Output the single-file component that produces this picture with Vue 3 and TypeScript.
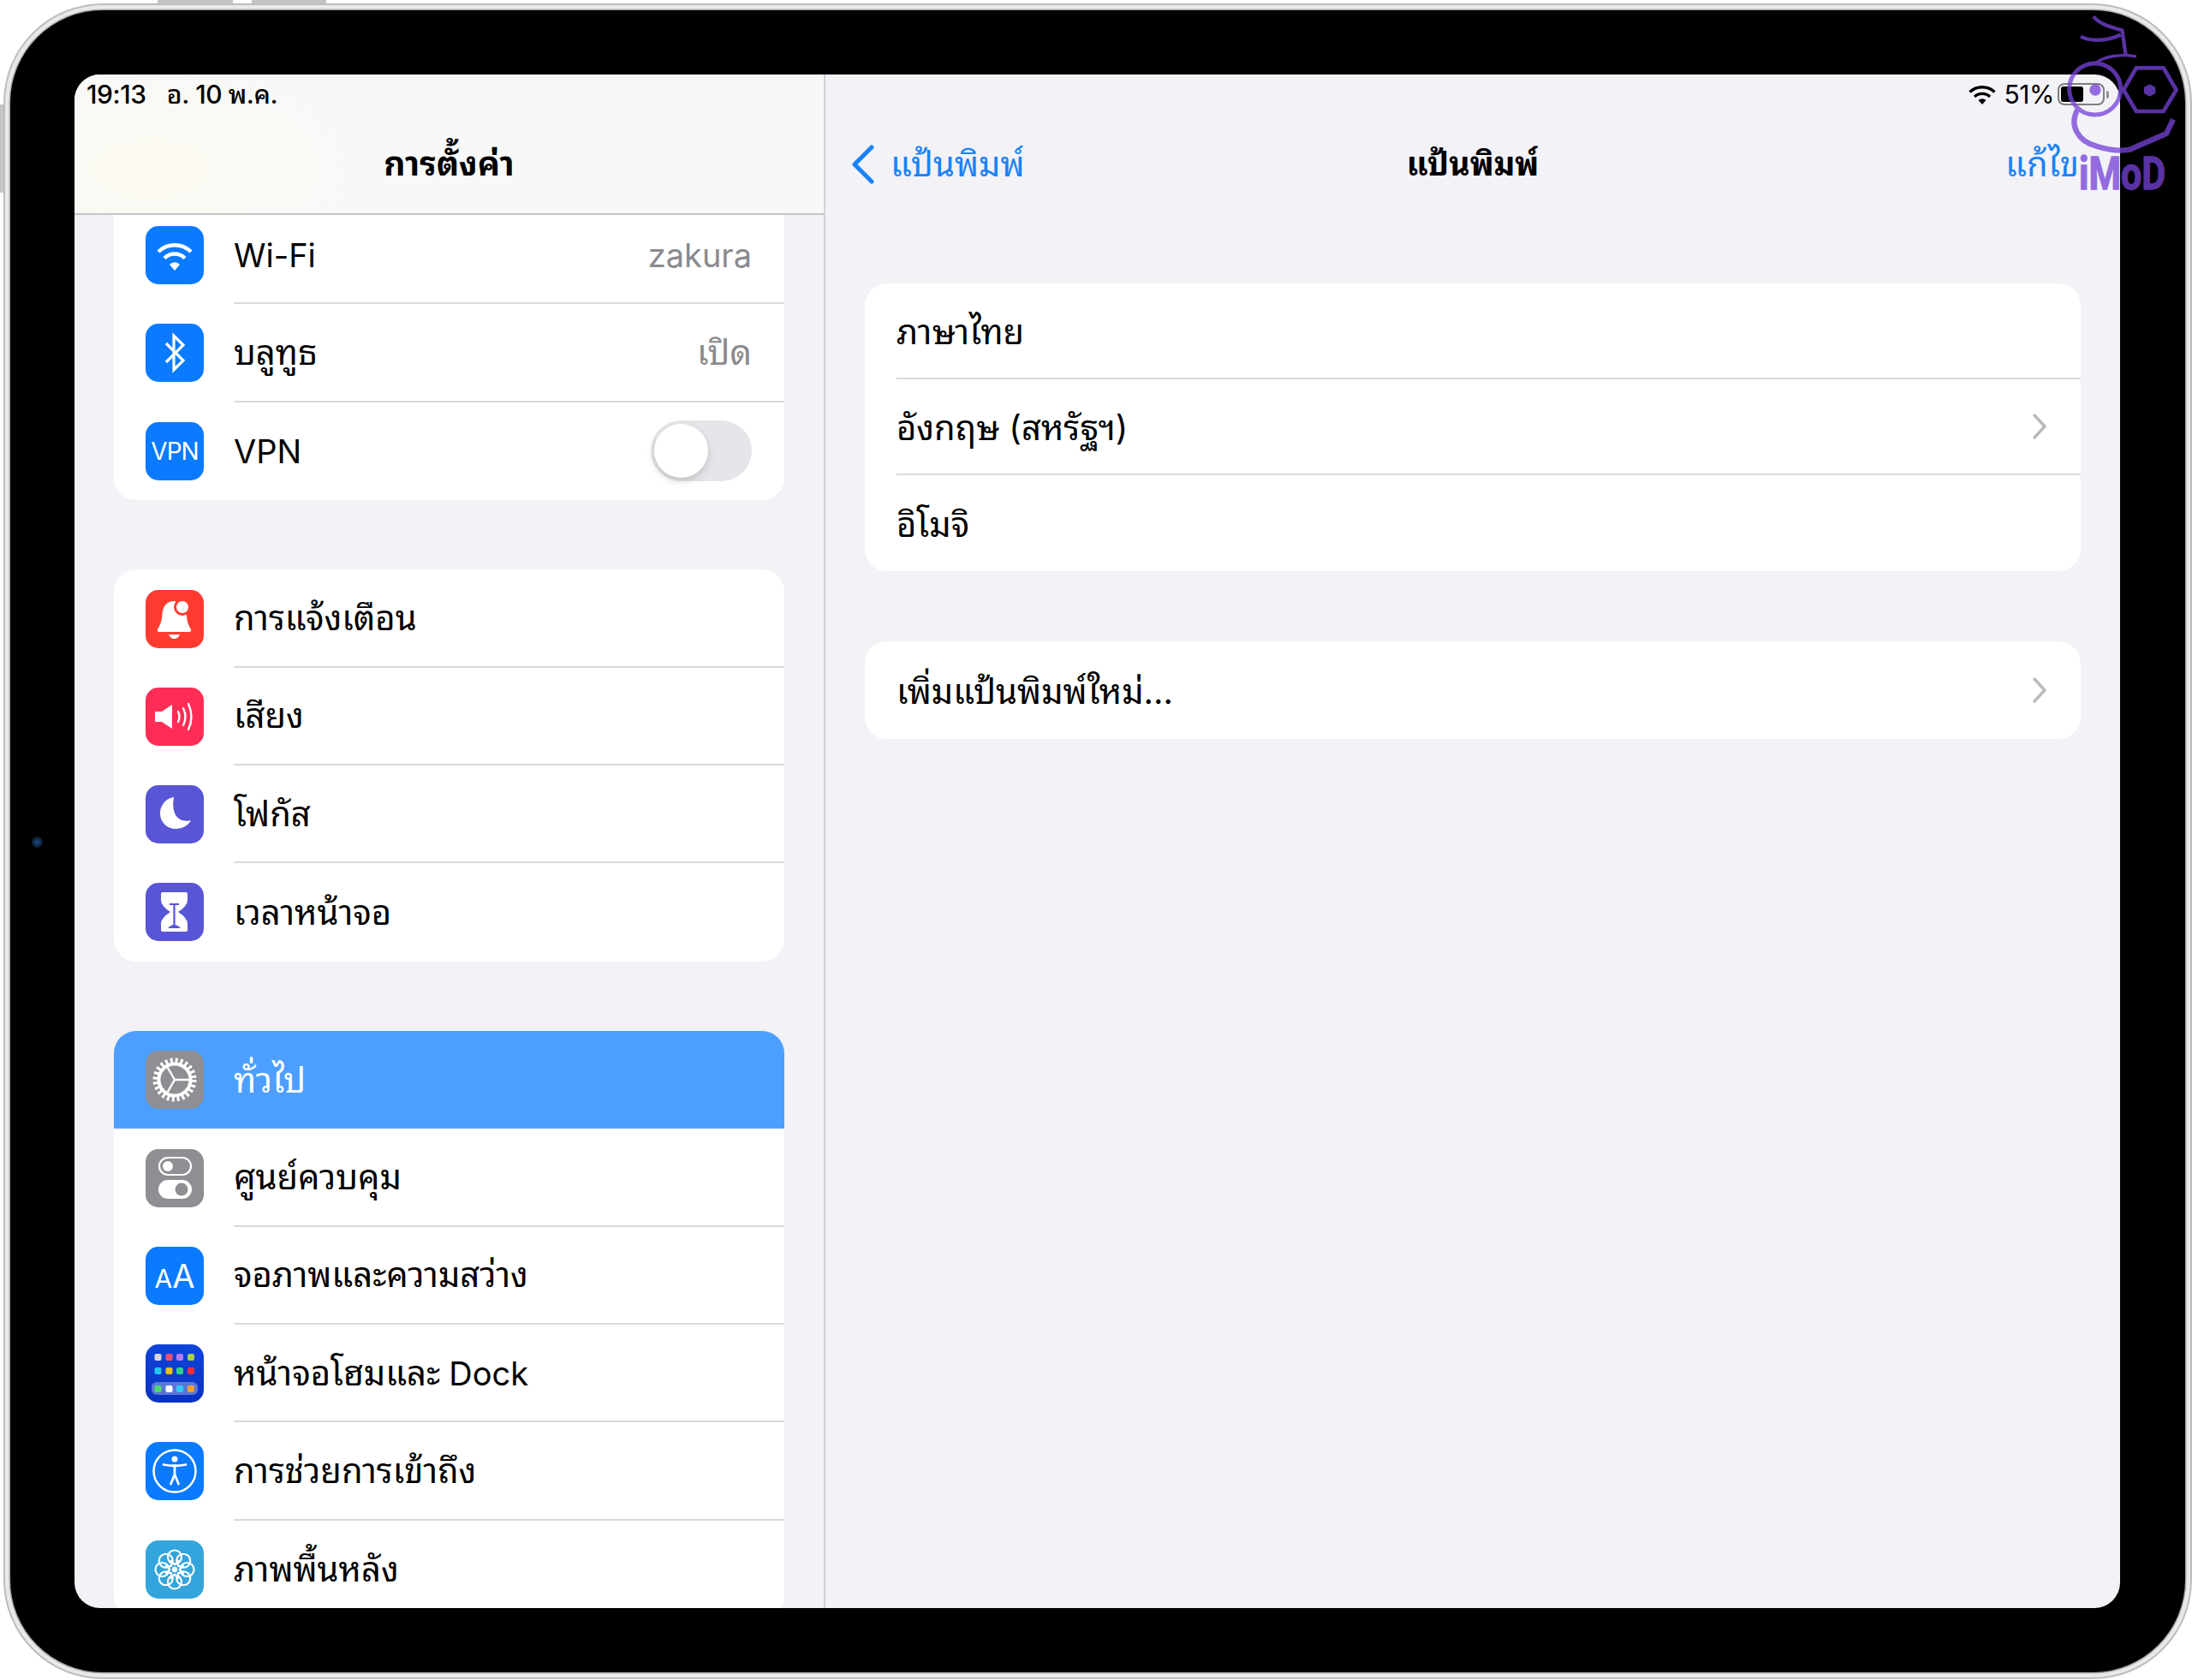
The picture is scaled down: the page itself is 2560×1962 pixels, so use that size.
<script setup lang="ts">
type SideRow = {
  icon: string;
  label: string;
  latin?: boolean;
  suffix?: string;
  value?: string;
  valueLatin?: boolean;
  toggle?: boolean;
  selected?: boolean;
};

const groups: SideRow[][] = [
  [
    { icon: "wifi", label: "Wi-Fi", latin: true, value: "zakura", valueLatin: true },
    { icon: "bluetooth", label: "บลูทูธ", value: "เปิด" },
    { icon: "vpn", label: "VPN", latin: true, toggle: true },
  ],
  [
    { icon: "bell", label: "การแจ้งเตือน" },
    { icon: "sound", label: "เสียง" },
    { icon: "moon", label: "โฟกัส" },
    { icon: "hourglass", label: "เวลาหน้าจอ" },
  ],
  [
    { icon: "gear", label: "ทั่วไป", selected: true },
    { icon: "control", label: "ศูนย์ควบคุม" },
    { icon: "display", label: "จอภาพและความสว่าง" },
    { icon: "home", label: "หน้าจอโฮมและ", suffix: "Dock" },
    { icon: "access", label: "การช่วยการเข้าถึง" },
    { icon: "wallpaper", label: "ภาพพื้นหลัง" },
  ],
];

const keyboards = [
  { label: "ภาษาไทย", chevron: false },
  { label: "อังกฤษ (สหรัฐฯ)", chevron: true },
  { label: "อิโมจิ", chevron: false },
];

const homeRows = [
  { y: 11, colors: ["#d9d9d9", "#f0506e", "#b57aee", "#a8d040"] },
  { y: 27, colors: ["#22c5f0", "#f7c010", "#30d090", "#f03040"] },
  { y: 48, colors: ["#50d870", "#ffffff", "#30c8f5", "#f5a030"] },
];
const homeX = [10.5, 23.5, 36, 49];
const petals = [0, 45, 90, 135, 180, 225, 270, 315];
const spokes = [90, 210, 330];
</script>

<template>
  <div class="page">
    <span class="hw hw-top-a"></span>
    <span class="hw hw-top-b"></span>
    <span class="hw hw-side"></span>

    <div class="bezel">
      <span class="camera"></span>
      <div class="screen">
        <aside class="sidebar">
          <header class="side-head">
            <div class="status-left">
              <span>19:13</span>
              <span>อ. 10 พ.ค.</span>
            </div>
            <div class="nav-title">การตั้งค่า</div>
          </header>

          <div class="side-scroll">
            <section v-for="(group, g) in groups" :key="g" class="card">
              <div
                v-for="row in group"
                :key="row.icon"
                :class="['row', { selected: row.selected }]"
              >
                <div :class="['icon', 'icon-' + row.icon]">
                  <svg v-if="row.icon === 'wifi'" viewBox="0 0 68 68" fill="none" stroke="#fff" stroke-width="4.5">
                    <path d="M15 30 A27 27 0 0 1 53 30" />
                    <path d="M22 37.500 A17 17 0 0 1 46 37.500" />
                    <path d="M28 45 L34 52 L40 45 A8 8 0 0 0 28 45 Z" fill="#fff" stroke="none" />
                  </svg>
                  <svg v-else-if="row.icon === 'bluetooth'" viewBox="0 0 68 68" fill="none" stroke="#fff" stroke-width="3.2">
                    <path d="M24 23 L44 43 L33 54 V14 L44 25 L24 45" />
                  </svg>
                  <span v-else-if="row.icon === 'vpn'" class="vpn-text">VPN</span>
                  <svg v-else-if="row.icon === 'bell'" viewBox="0 0 68 68" fill="#fff">
                    <path d="M33.500 13 C24 13 20 20 19.500 28 C19 37 17 41 14 46 Q13 49 16 49 H51 Q54 49 53 46 C50 41 48.500 37 48 30 C45 22 40 13 33.500 13 Z" />
                    <path d="M27 52 H40 Q38 57 33.500 57 Q29 57 27 52 Z" />
                    <circle cx="43" cy="20" r="10" fill="#ff3b30" />
                    <circle cx="43" cy="20" r="7" />
                  </svg>
                  <svg v-else-if="row.icon === 'sound'" viewBox="0 0 68 68" fill="#fff">
                    <path d="M11 28 H19 L31 20 V48 L19 40 H11 Z" />
                    <g fill="none" stroke="#fff" stroke-width="2.400" stroke-linecap="round">
                      <path d="M38 28 Q41 34 38 40" />
                      <path d="M44 24 Q49 34 44 44" />
                      <path d="M50 19 Q57 34 50 49" />
                    </g>
                  </svg>
                  <svg v-else-if="row.icon === 'moon'" viewBox="0 0 68 68" fill="#fff">
                    <path d="M33 14 C21 16 17 26 17 33 C17 44 26 51 35 51 C43 51 50 47 53 41 C42 44 29 38 33 14 Z" />
                  </svg>
                  <svg v-else-if="row.icon === 'hourglass'" viewBox="0 0 68 68">
                    <path fill="#fff" d="M20 11 H47 Q49 11 49 13 V20 Q49 27 38 34 Q49 41 49 48 V55 Q49 57 47 57 H20 Q18 57 18 55 V48 Q18 41 29 34 Q18 27 18 20 V13 Q18 11 20 11 Z" />
                    <path fill="none" stroke="#5856d6" stroke-width="2.200" d="M28 25 H39 M33.500 25 V50" />
                    <path fill="#5856d6" d="M26 53 Q33.500 45 41 53 Z" />
                  </svg>
                  <svg v-else-if="row.icon === 'gear'" viewBox="0 0 68 68" fill="none" stroke="#fff">
                    <circle cx="34" cy="34" r="22.500" stroke-width="6" stroke-dasharray="3 2.890" />
                    <circle cx="34" cy="34" r="18.500" stroke-width="4" />
                    <line
                      v-for="a in spokes"
                      :key="a"
                      x1="34"
                      y1="34"
                      x2="34"
                      y2="16"
                      stroke-width="2.400"
                      :transform="`rotate(${a} 34 34)`"
                    />
                  </svg>
                  <svg v-else-if="row.icon === 'control'" viewBox="0 0 68 68">
                    <rect x="16" y="10" width="37" height="20" rx="10" fill="none" stroke="#fff" stroke-width="2.200" />
                    <circle cx="26" cy="20" r="6" fill="#fff" />
                    <rect x="15" y="36" width="39" height="22" rx="11" fill="#fff" />
                    <circle cx="42" cy="47" r="7.500" fill="#8e8e93" />
                  </svg>
                  <span v-else-if="row.icon === 'display'" class="aa-text"><small>A</small>A</span>
                  <svg v-else-if="row.icon === 'home'" viewBox="0 0 68 68">
                    <rect x="7" y="44" width="54" height="15" rx="6" fill="#fff" fill-opacity=".32" />
                    <template v-for="r in homeRows" :key="r.y">
                      <rect
                        v-for="(c, i) in r.colors"
                        :key="c"
                        :x="homeX[i]"
                        :y="r.y"
                        width="8"
                        height="8"
                        rx="2"
                        :fill="c"
                      />
                    </template>
                  </svg>
                  <svg v-else-if="row.icon === 'access'" viewBox="0 0 68 68" fill="none" stroke="#fff">
                    <circle cx="34" cy="34" r="24.500" stroke-width="2.500" />
                    <circle cx="34" cy="20" r="3.500" fill="#fff" stroke="none" />
                    <path d="M21 26.500 Q34 29 47 26.500" stroke-width="2.800" stroke-linecap="round" />
                    <path d="M34 28 V38 M34 38 L29.500 49 M34 38 L38.500 49" stroke-width="2.800" stroke-linecap="round" />
                  </svg>
                  <svg v-else-if="row.icon === 'wallpaper'" viewBox="0 0 68 68" fill="none" stroke="#fff" stroke-width="2.200">
                    <g v-for="a in petals" :key="a" :transform="`rotate(${a} 34 34)`">
                      <circle cx="34" cy="19.500" r="8" />
                      <path d="M34 29 L30 23 M34 29 L38 23" stroke-width="1.600" />
                    </g>
                    <circle cx="34" cy="34" r="3.200" fill="#fff" stroke="none" />
                  </svg>
                </div>

                <div class="row-body">
                  <span :class="['label', { latin: row.latin }]">{{ row.label }}<span v-if="row.suffix" class="suffix">{{ row.suffix }}</span></span>
                  <span v-if="row.value" :class="['value', { latin: row.valueLatin }]">{{ row.value }}</span>
                  <span v-if="row.toggle" class="toggle"><i></i></span>
                </div>
              </div>
            </section>
          </div>
        </aside>

        <main class="detail">
          <div class="status-right">
            <svg class="st-wifi" viewBox="0 0 32 23" fill="none" stroke="#000" stroke-width="3.400">
              <path d="M1.500 8.500 A21 21 0 0 1 30.500 8.500" />
              <path d="M7 14 A13 13 0 0 1 25 14" />
              <path d="M11.500 18 L16 23 L20.500 18 A6.500 6.500 0 0 0 11.500 18 Z" fill="#000" stroke="none" />
            </svg>
            <span class="st-percent">51%</span>
            <span class="battery"><i></i></span>
            <span class="nub"></span>
          </div>

          <header class="detail-head">
            <div class="back">
              <svg viewBox="0 0 28 46" fill="none" stroke="#1a82f7" stroke-width="5" stroke-linecap="round" stroke-linejoin="round">
                <path d="M24 3 L4 23 L24 43" />
              </svg>
              <span>แป้นพิมพ์</span>
            </div>
            <div class="nav-title detail-title">แป้นพิมพ์</div>
            <div class="edit">แก้ไข</div>
          </header>

          <section class="card wide">
            <div v-for="k in keyboards" :key="k.label" class="wide-row">
              <div class="row-body">
                <span class="label">{{ k.label }}</span>
                <svg v-if="k.chevron" class="chev" viewBox="0 0 18 32" fill="none" stroke="#b9b9bd" stroke-width="3.400" stroke-linecap="round" stroke-linejoin="round">
                  <path d="M3 3 L15 16 L3 29" />
                </svg>
              </div>
            </div>
          </section>

          <section class="card wide second">
            <div class="wide-row single">
              <div class="row-body">
                <span class="label">เพิ่มแป้นพิมพ์ใหม่...</span>
                <svg class="chev" viewBox="0 0 18 32" fill="none" stroke="#b9b9bd" stroke-width="3.400" stroke-linecap="round" stroke-linejoin="round">
                  <path d="M3 3 L15 16 L3 29" />
                </svg>
              </div>
            </div>
          </section>
        </main>
      </div>
    </div>

    <svg class="watermark" viewBox="0 0 1080 780" fill="none" stroke="#7642d8" stroke-width="15">
      <path d="M735 58 C755 85 800 97 835 106 L848 192" stroke-width="13" />
      <path d="M690 128 C730 148 785 142 830 122" stroke-width="13" />
      <circle cx="740" cy="312" r="90" />
      <path d="M740 222 C780 192 840 190 885 198" stroke-width="10" />
      <path d="M678 385 C650 440 680 495 745 512 C790 526 830 530 862 524 L990 468 L1014 418" stroke-width="19" />
      <path d="M885 238 H980 L1025 315 L980 390 H885 L840 315 Z" stroke-width="14" />
      <path d="M932 295 L952 305 V327 L932 338 L912 327 V305 Z" fill="#7642d8" stroke="none" />
      <circle cx="741" cy="315" r="20" fill="#7642d8" stroke="none" />
      <text x="684" y="664" class="wm-text" textLength="304" lengthAdjust="spacingAndGlyphs" fill="#7642d8" stroke="#7642d8" stroke-width="4">iMoD</text>
    </svg>
  </div>
</template>

<style scoped>
.page {
  position: relative;
  box-sizing: border-box;
  width: 2560px;
  height: 1962px;
  padding: 12px 8px 9px 12px;
  background: #fff;
  overflow: hidden;
  font-family: Inter, "Noto Sans Thai Looped", "Loma", "Noto Sans Thai", "Noto Sans", "Liberation Sans", sans-serif;
  color: #000;
}

.hw {
  position: absolute;
  background: #c4c4c4;
}
.hw-top-a {
  left: 184px;
  top: 0;
  width: 88px;
  height: 4px;
}
.hw-top-b {
  left: 294px;
  top: 0;
  width: 87px;
  height: 4px;
}
.hw-side {
  left: 0;
  top: 122px;
  width: 4px;
  height: 103px;
}

.bezel {
  position: relative;
  box-sizing: border-box;
  height: 100%;
  padding: 75px 76px 75px 75px;
  background: #000;
  border-radius: 108px;
  box-shadow: 0 0 0 1.5px #a9a9a9, 0 0 0 6px #e9e9e9, 0 0 0 8px #bdbdbd;
}

.camera {
  position: absolute;
  left: 25px;
  top: 965px;
  width: 13px;
  height: 13px;
  border-radius: 50%;
  background: radial-gradient(circle, #1d4f86 0, #10243c 55%, #06080c 100%);
}

.screen {
  display: flex;
  height: 100%;
  border-radius: 30px;
  overflow: hidden;
  background: #f2f2f7;
}

.sidebar {
  display: flex;
  flex-direction: column;
  flex: 0 0 877px;
  box-sizing: border-box;
  border-right: 2px solid #d2d2d6;
}

.side-head {
  position: relative;
  box-sizing: border-box;
  flex: 0 0 164px;
  padding-top: 74px;
  text-align: center;
  background:
    radial-gradient(ellipse 260px 130px at 90px 110px, #fbf9f0 0, rgba(251, 249, 240, 0) 100%),
    #f8f8f8;
  border-bottom: 2px solid #c6c6c8;
}

.status-left {
  position: absolute;
  left: 14px;
  top: 4px;
  display: flex;
  gap: 24px;
  font-size: 30px;
  font-weight: 500;
  line-height: 38px;
  letter-spacing: -0.4px;
}

.nav-title {
  font-size: 39px;
  line-height: 60px;
  font-weight: 700;
}
.detail-title {
  font-size: 37.5px;
}

.side-scroll {
  flex: 1;
  min-height: 0;
  overflow: hidden;
  padding: 0 46px;
  margin-top: -10px;
}

.card {
  background: #fff;
  border-radius: 26px;
  overflow: hidden;
  margin-bottom: 81.5px;
}

.side-scroll .card:first-child {
  border-radius: 0 0 26px 26px;
}

.row {
  display: flex;
  align-items: center;
  height: 114.3px;
  padding-left: 37px;
}

.row.selected {
  background: #4d9fff;
  color: #fff;
}

.row-body {
  display: flex;
  flex: 1;
  align-items: center;
  justify-content: space-between;
  box-sizing: border-box;
  height: 100%;
  padding-right: 38px;
  border-bottom: 2px solid #d9d9dc;
}

.row:last-child .row-body,
.row.selected .row-body,
.wide-row:last-child .row-body {
  border-bottom: none;
}

.icon {
  display: flex;
  align-items: center;
  justify-content: center;
  flex: none;
  width: 68px;
  height: 68px;
  margin-right: 35px;
  border-radius: 15px;
  background: #0a7aff;
  color: #fff;
}

.icon svg {
  display: block;
  width: 68px;
  height: 68px;
}

.icon-bell {
  background: #ff3b30;
}
.icon-sound {
  background: #ff2d55;
}
.icon-moon,
.icon-hourglass {
  background: #5856d6;
}
.icon-gear,
.icon-control {
  background: #8e8e93;
}
.icon-home {
  background: linear-gradient(#0f44dc, #0a32c0);
}
.icon-wallpaper {
  background: #34a5dc;
}

.vpn-text {
  font-size: 28px;
  letter-spacing: -1px;
}

.aa-text {
  font-size: 38px;
  letter-spacing: 0;
}
.aa-text small {
  font-size: 30px;
}

.label {
  margin-top: 1px;
  font-size: 40px;
  line-height: 52px;
}
.label.latin {
  font-size: 38px;
}
.suffix {
  margin-left: 10px;
  font-size: 38px;
}

.value {
  margin-top: 1px;
  font-size: 40px;
  line-height: 52px;
  color: #8a8a8e;
}
.value.latin {
  font-size: 38px;
}

.toggle {
  display: block;
  box-sizing: border-box;
  width: 118px;
  height: 71px;
  padding: 4px;
  border-radius: 36px;
  background: #e5e5ea;
}
.toggle i {
  display: block;
  width: 63px;
  height: 63px;
  border-radius: 50%;
  background: #fff;
  box-shadow: 0 4px 10px rgba(0, 0, 0, 0.16);
}

.detail {
  position: relative;
  flex: 1;
  min-width: 0;
  padding: 0 46px;
}

.status-right {
  position: absolute;
  right: 13px;
  top: 10px;
  display: flex;
  align-items: center;
  height: 26px;
}
.st-wifi {
  width: 32px;
  height: 23px;
  margin-right: 10px;
}
.st-percent {
  font-size: 30px;
  line-height: 26px;
  margin-right: 4px;
  letter-spacing: -0.5px;
}
.battery {
  box-sizing: border-box;
  display: block;
  width: 55px;
  height: 26px;
  padding: 2px;
  border: 2px solid #7f7f7f;
  border-radius: 8px;
}
.battery i {
  display: block;
  width: 26px;
  height: 100%;
  background: #000;
  border-radius: 3px;
}
.nub {
  width: 3px;
  height: 9px;
  margin-left: 2px;
  background: #8f8f8f;
  border-radius: 0 3px 3px 0;
}

.detail-head {
  display: grid;
  grid-template-columns: 1fr auto 1fr;
  align-items: center;
  align-content: start;
  box-sizing: border-box;
  height: 244px;
  margin: 0 -16px 0 -16px;
  padding-top: 75px;
}

.back {
  display: flex;
  align-items: center;
  gap: 18px;
  height: 60px;
  font-size: 40px;
  line-height: 60px;
  color: #1a82f7;
}
.back svg {
  width: 28px;
  height: 46px;
}

.edit {
  justify-self: end;
  margin-right: 18px;
  font-size: 40px;
  line-height: 60px;
  color: #1a82f7;
}

.wide {
  margin-bottom: 82px;
}

.wide-row {
  height: 112px;
  padding-left: 37px;
}
.wide-row.single {
  height: 114px;
}
.wide-row .row-body {
  padding-right: 39px;
}
.wide-row .label {
  margin-top: 3px;
}

.chev {
  width: 18px;
  height: 32px;
}

.watermark {
  position: absolute;
  left: 2200px;
  top: 0;
  width: 360px;
  height: 260px;
  opacity: 0.76;
}
.wm-text {
  font-family: Roboto, "Liberation Sans", sans-serif;
  font-size: 160px;
  font-weight: 700;
}
</style>

<style>
html,
body {
  margin: 0;
  background: #fff;
}
</style>
